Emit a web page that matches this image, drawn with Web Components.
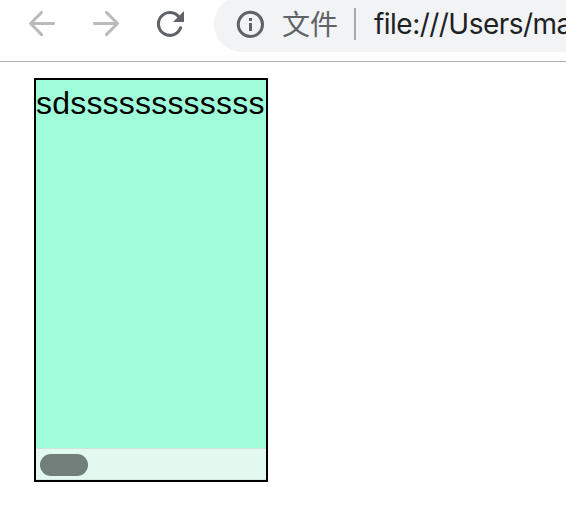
<!DOCTYPE html>
<html lang="zh">
<head>
<meta charset="utf-8">
<title>file</title>
<style>
body {
    margin: 0;
    height: 514px;
    overflow: hidden;
    background: #fff;
    font-family: "Liberation Sans", Arial, sans-serif;
}
</style>
</head>
<body>
<browser-toolbar>
    <address-bar slot="address" label="文件">file:///Users/ma</address-bar>
</browser-toolbar>
<scroll-box>sdssssssssssss</scroll-box>

<script>
class BrowserToolbar extends HTMLElement {
    constructor() {
        super();
        this.attachShadow({ mode: "open" });
        this.render();
    }

    render() {
        this.shadowRoot.innerHTML = `
            <style>
            :host {
                display: flex;
                box-sizing: border-box;
                height: 62px;
                padding-left: 26px;
                border-bottom: 1px solid #b0b0b1;
                overflow: hidden;
            }
            svg {
                display: block;
                flex: none;
                width: 32px;
                height: 32px;
                margin: 8px 32px 0 0;
                fill: none;
                stroke: #b9babc;
                stroke-width: 2.9;
                stroke-linecap: round;
                stroke-linejoin: round;
            }
            .reload {
                margin-right: 28px;
                stroke: #5f6368;
                stroke-width: 3.1;
            }
            .reload .head {
                fill: #5f6368;
                stroke: none;
            }
            </style>
            <svg viewBox="0 0 32 32"><path d="M27.6 15.5H4.8M15.6 4.4L4.5 15.5L15.6 26.6"/></svg>
            <svg viewBox="0 0 32 32"><path d="M4.4 15.5H27.2M16.4 4.4L27.5 15.5L16.4 26.6"/></svg>
            <svg class="reload" viewBox="0 0 32 32">
                <path d="M26.6 19.8A11.4 11.4 0 1 1 24.2 8.1"/>
                <path class="head" d="M30 3V14H19Z"/>
            </svg>
            <slot name="address"></slot>
        `;
    }
}

customElements.define("browser-toolbar", BrowserToolbar);

class AddressBar extends HTMLElement {
    constructor() {
        super();
        this.attachShadow({ mode: "open" });
        this.render();
    }

    render() {
        this.shadowRoot.innerHTML = `
            <style>
            :host {
                display: flex;
                align-items: center;
                flex: none;
                box-sizing: border-box;
                width: 420px;
                height: 56px;
                margin-top: -4px;
                padding-left: 22px;
                border-radius: 28px;
                background: #f1f3f4;
                color: #202124;
                font: 28px/36px Inter, "Noto Sans CJK SC", sans-serif;
                white-space: nowrap;
            }
            svg {
                width: 28px;
                height: 28px;
                margin-right: 18px;
                fill: #5f6368;
            }
            circle {
                fill: none;
                stroke: #5f6368;
                stroke-width: 3;
            }
            .label {
                padding-bottom: 2px;
                color: #5f6368;
                font-family: "Noto Sans CJK SC", sans-serif;
            }
            .divider {
                width: 2px;
                height: 32px;
                margin: 0 18px 0 16px;
                background: #a9abae;
            }
            .url {
                letter-spacing: -0.53px;
            }
            </style>
            <svg viewBox="0 0 28 28">
                <circle cx="14.4" cy="14.4" r="12.1"/>
                <path d="M13 8h3v3h-3zM13 13h3v8h-3z"/>
            </svg>
            <span class="label">${this.getAttribute("label")}</span>
            <span class="divider"></span>
            <span class="url"><slot></slot></span>
        `;
    }
}

customElements.define("address-bar", AddressBar);

class ScrollBox extends HTMLElement {
    constructor() {
        super();
        this.attachShadow({ mode: "open" });
        this.render();
    }

    render() {
        this.shadowRoot.innerHTML = `
            <style>
            :host {
                display: flex;
                flex-direction: column;
                box-sizing: border-box;
                width: 234px;
                height: 404px;
                margin: 16px 0 0 34px;
                border: 2px solid #000;
                background: #a0fdd9;
            }
            .content {
                flex: 1;
                padding-top: 5px;
                font-size: 32px;
                line-height: 37px;
                letter-spacing: 0.2px;
                white-space: nowrap;
                overflow: hidden;
            }
            .track {
                box-sizing: border-box;
                height: 32px;
                padding: 5px 4px 0;
                border-top: 1px solid #cfe5dc;
                border-bottom: 1px solid #d3e8df;
                background: #e2f9ef;
            }
            .thumb {
                width: 48px;
                height: 22px;
                border-radius: 11px;
                background: #727e79;
            }
            </style>
            <div class="content"><slot></slot></div>
            <div class="track"><div class="thumb"></div></div>
        `;
    }
}

customElements.define("scroll-box", ScrollBox);
</script>
</body>
</html>
